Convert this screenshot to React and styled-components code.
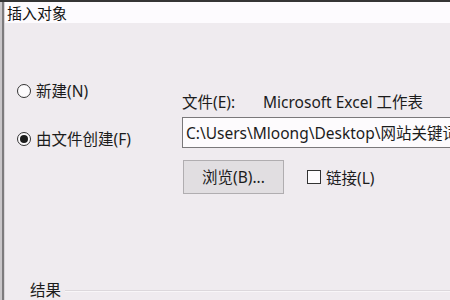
import React from "react";
import styled, { createGlobalStyle } from "styled-components";

const Global = createGlobalStyle`
  html, body {
    margin: 0;
    padding: 0;
    width: 450px;
    height: 300px;
    overflow: hidden;
    background: #efebef;
  }
  body {
    font-family: "Noto Sans", "Noto Sans CJK SC", sans-serif;
    font-size: 15.5px;
    color: #1c1c1c;
  }
`;

const Frame = styled.div`
  width: 450px;
  height: 300px;
  border-top: 2px solid #353535;
  box-sizing: border-box;
  display: flex;
  overflow: hidden;
`;

const Edge = styled.div`
  width: 2px;
  border-left: 2px solid #c9c6c9;
  background: #7d7b7d;
  flex-shrink: 0;
`;

const Window = styled.div`
  flex: 1;
  display: flex;
  flex-direction: column;
  border-left: 1px solid #d8d4d8;
  min-width: 0;
`;

const TitleBar = styled.div`
  height: 30px;
  background: #fdfbfe;
  display: flex;
  align-items: center;
  padding-left: 2px;
  font-family: "Noto Sans CJK SC", sans-serif;
  font-size: 15px;
  color: #111;
`;

const Body = styled.div`
  flex: 1;
  display: flex;
  flex-direction: column;
  background: #efebef;
`;

const Top = styled.div`
  display: flex;
`;

const Choices = styled.div`
  width: 177px;
  padding: 58px 0 0 12px;
  display: flex;
  flex-direction: column;
  gap: 28px;
  box-sizing: border-box;
`;

const Choice = styled.label`
  display: flex;
  align-items: center;
  gap: 5px;
  height: 20px;
  line-height: 20px;
  white-space: nowrap;
`;

const Radio = styled.span`
  width: 14px;
  height: 14px;
  border-radius: 50%;
  border: 1px solid #333;
  background: #fdfbfd;
  box-sizing: border-box;
  display: flex;
  align-items: center;
  justify-content: center;
  &::after {
    content: "";
    width: 8px;
    height: 8px;
    border-radius: 50%;
    background: ${(p) => (p.checked ? "#1c1c1c" : "transparent")};
  }
`;

const Details = styled.div`
  flex: 1;
  padding-top: 69px;
  display: flex;
  flex-direction: column;
  min-width: 0;
`;

const FileRow = styled.div`
  display: flex;
  height: 20px;
  line-height: 20px;
  white-space: nowrap;
`;

const FileLabel = styled.span`
  width: 81px;
`;

const PathBox = styled.div`
  margin-top: 5px;
  height: 31px;
  border: 1px solid #7a787a;
  border-right: none;
  background: #fdfbfd;
  box-sizing: border-box;
  display: flex;
  align-items: center;
  padding-left: 3px;
  white-space: nowrap;
  overflow: hidden;
`;

const Actions = styled.div`
  margin-top: 12px;
  display: flex;
  align-items: center;
`;

const Button = styled.button`
  all: unset;
  width: 101px;
  height: 34px;
  margin-left: 1px;
  box-sizing: border-box;
  background: #e1dee1;
  border: 1px solid #b0adb0;
  text-align: center;
  line-height: 32px;
  font-family: "Noto Sans", "Noto Sans CJK SC", sans-serif;
  font-size: 15.5px;
  color: #1c1c1c;
`;

const Check = styled.label`
  margin-left: 23px;
  display: flex;
  align-items: center;
  gap: 5px;
`;

const Box = styled.span`
  width: 14px;
  height: 14px;
  border: 1px solid #333;
  background: #fdfbfd;
  box-sizing: border-box;
`;

const Result = styled.div`
  margin-top: 86px;
  padding-left: 25px;
  display: flex;
  align-items: center;
  gap: 4px;
  height: 20px;
  line-height: 20px;
`;

const Rule = styled.div`
  flex: 1;
  height: 0;
  border-top: 1px solid #dcd8dc;
  border-bottom: 1px solid #f8f6f8;
  margin-top: 2px;
`;

export default function App() {
  return (
    <>
      <Global />
      <Frame>
        <Edge />
        <Window>
          <TitleBar>插入对象</TitleBar>
          <Body>
            <Top>
              <Choices>
                <Choice>
                  <Radio />
                  新建(N)
                </Choice>
                <Choice>
                  <Radio checked />
                  由文件创建(F)
                </Choice>
              </Choices>
              <Details>
                <FileRow>
                  <FileLabel>文件(E):</FileLabel>
                  <span>Microsoft Excel 工作表</span>
                </FileRow>
                <PathBox>C:\Users\Mloong\Desktop\网站关键词</PathBox>
                <Actions>
                  <Button>浏览(B)...</Button>
                  <Check>
                    <Box />
                    链接(L)
                  </Check>
                </Actions>
              </Details>
            </Top>
            <Result>
              结果
              <Rule />
            </Result>
          </Body>
        </Window>
      </Frame>
    </>
  );
}
